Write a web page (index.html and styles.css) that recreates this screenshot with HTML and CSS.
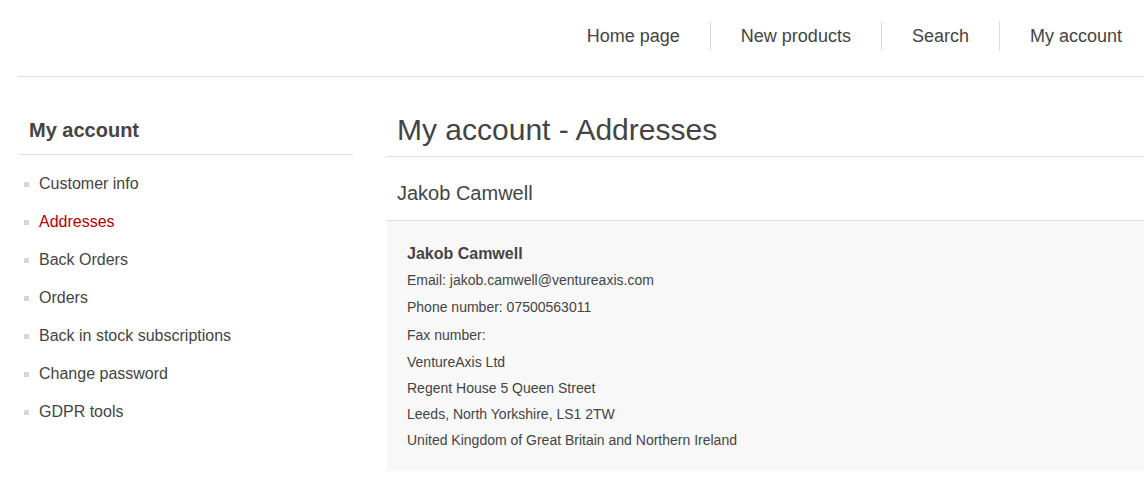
FILE: index.html
```html
<!DOCTYPE html>
<html>
<head>
<meta charset="utf-8">
<link rel="stylesheet" href="styles.css">
</head>
<body>
<div class="page">
  <header class="header">
    <ul class="top-menu">
      <li><a href="#">Home page</a></li>
      <li><a href="#">New products</a></li>
      <li><a href="#">Search</a></li>
      <li><a href="#">My account</a></li>
    </ul>
  </header>
  <div class="columns">
    <aside class="side">
      <div class="side-title">My account</div>
      <ul class="side-list">
        <li><a href="#">Customer info</a></li>
        <li class="active"><a href="#">Addresses</a></li>
        <li><a href="#">Back Orders</a></li>
        <li><a href="#">Orders</a></li>
        <li><a href="#">Back in stock subscriptions</a></li>
        <li><a href="#">Change password</a></li>
        <li><a href="#">GDPR tools</a></li>
      </ul>
    </aside>
    <main class="main">
      <h1 class="page-title">My account - Addresses</h1>
      <div class="address-title">Jakob Camwell</div>
      <ul class="address-info">
        <li class="name">Jakob Camwell</li>
        <li class="m2">Email: jakob.camwell@ventureaxis.com</li>
        <li class="m3">Phone number: 07500563011</li>
        <li class="m4">Fax number:</li>
        <li class="m3">VentureAxis Ltd</li>
        <li class="m2">Regent House 5 Queen Street</li>
        <li class="m2">Leeds, North Yorkshire, LS1 2TW</li>
        <li class="m2">United Kingdom of Great Britain and Northern Ireland</li>
      </ul>
    </main>
  </div>
</div>
</body>
</html>
```
FILE: styles.css
```css
* { box-sizing: border-box; }
html, body { margin: 0; padding: 0; background: #fff; }
body {
  font-family: "Liberation Sans", Arial, sans-serif;
  color: #444;
  width: 1144px;
  overflow: hidden;
}
a { color: inherit; text-decoration: none; }
ul { list-style: none; margin: 0; padding: 0; }

.page { padding-left: 18px; }

.header {
  height: 77px;
  border-bottom: 1px solid #ddd;
  padding-top: 21px;
  padding-right: 22px;
}
.top-menu {
  display: flex;
  justify-content: flex-end;
}
.top-menu li {
  height: 30px;
  line-height: 30px;
  font-size: 18px;
  padding: 0 30px;
  border-left: 1px solid #ddd;
}
.top-menu li:first-child { border-left: none; }
.top-menu li:last-child { padding-right: 0; }

.columns {
  display: flex;
  gap: 34px;
  padding-top: 38px;
}
.side { width: 335px; flex: none; padding-left: 1px; }
.side-title {
  font-size: 20px;
  font-weight: bold;
  line-height: 30px;
  padding: 0 0 0 10px;
  height: 40px;
  border-bottom: 1px solid #ddd;
}
.side-list { padding-top: 10px; }
.side-list li {
  position: relative;
  font-size: 16px;
  line-height: 20px;
  padding: 9px 0 9px 20px;
}
.side-list li::before {
  content: "";
  position: absolute;
  left: 5px;
  top: 17px;
  width: 5px;
  height: 5px;
  background: #d6d6d6;
}
.side-list li.active a { color: #b00000; }

.main { flex: 1; min-width: 800px; }
.page-title {
  margin: 0;
  font-size: 30px;
  font-weight: normal;
  line-height: 30px;
  padding: 0 0 0 10px;
  height: 42px;
  border-bottom: 1px solid #ddd;
}
.address-title {
  font-size: 20px;
  line-height: 30px;
  padding: 21px 0 12px 10px;
  border-bottom: 1px solid #ddd;
}
.address-info {
  background: #f8f8f8;
  padding: 21px 20px 19px 20px;
  font-size: 14px;
}
.address-info li { line-height: 24px; }
.address-info .name { font-size: 16px; font-weight: bold; }
.address-info .m2 { margin-top: 2px; }
.address-info .m3 { margin-top: 3px; }
.address-info .m4 { margin-top: 4px; }
```
